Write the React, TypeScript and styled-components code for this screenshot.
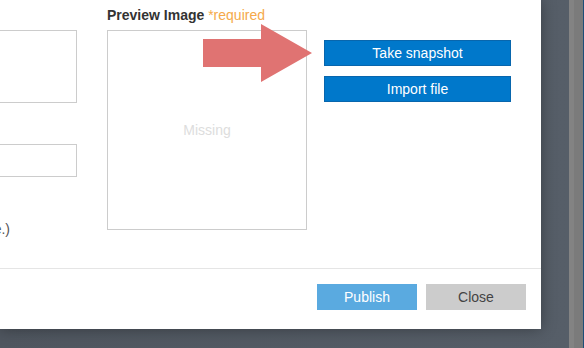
import styled, { createGlobalStyle } from 'styled-components';

const GlobalStyle = createGlobalStyle`
  html, body {
    margin: 0;
    padding: 0;
    overflow: hidden;
  }
  body {
    font-family: "Liberation Sans", Arial, sans-serif;
    background: #535a63;
  }
`;

export default function App() {
  return (
    <>
      <GlobalStyle />
      <Page>
        <Backdrop>
          <Dialog>
            <Body>
              <FieldColumn>
                <TextArea />
                <TextInput />
                <HelpText>(Optional, shown on the page.)</HelpText>
              </FieldColumn>
              <PreviewColumn>
                <Label>
                  Preview Image <Required>*required</Required>
                </Label>
                <PreviewBox>Missing</PreviewBox>
              </PreviewColumn>
              <ActionColumn>
                <ActionButton>Take snapshot</ActionButton>
                <ActionButton>Import file</ActionButton>
              </ActionColumn>
              <Arrow width="110" height="60" viewBox="0 0 110 60">
                <polygon
                  points="0,15 58,15 58,0 109,29 58,58 58,43 0,43"
                  fill="#e07372"
                />
              </Arrow>
            </Body>
            <Footer>
              <FooterButton $variant="primary">Publish</FooterButton>
              <FooterButton $variant="neutral">Close</FooterButton>
            </Footer>
          </Dialog>
        </Backdrop>
        <ScrollStrip />
        <EdgeLine />
      </Page>
    </>
  );
}

const Page = styled.div`
  display: flex;
  width: 584px;
  height: 348px;
  overflow: hidden;
`;

const Backdrop = styled.div`
  width: 569px;
  height: 348px;
  flex-shrink: 0;
  background: linear-gradient(90deg, #4f565f 0%, #565e68 100%);
`;

const Dialog = styled.div`
  width: 541px;
  height: 329px;
  background: #fff;
  box-shadow: 0 0 14px rgba(0, 0, 0, 0.35);
  display: flex;
  flex-direction: column;
`;

const Body = styled.div`
  position: relative;
  display: flex;
  align-items: flex-start;
  gap: 30px;
  height: 269px;
  box-sizing: border-box;
  padding: 7px 30px 0 0;
  border-bottom: 1px solid #e5e5e5;
`;

const FieldColumn = styled.div`
  display: flex;
  flex-direction: column;
  width: 277px;
  margin-left: -200px;
  flex-shrink: 0;
`;

const Label = styled.div`
  font-size: 14px;
  line-height: 16px;
  font-weight: bold;
  color: #333;
  margin-bottom: 7px;
  white-space: nowrap;
`;

const Required = styled.span`
  font-weight: normal;
  color: #f5a94a;
`;

const TextArea = styled.div`
  margin-top: 23px;
  height: 73px;
  box-sizing: border-box;
  border: 1px solid #ccc;
`;

const TextInput = styled.div`
  margin-top: 41px;
  height: 33px;
  box-sizing: border-box;
  border: 1px solid #ccc;
`;

const HelpText = styled.div`
  margin-top: 44px;
  padding-right: 67px;
  text-align: right;
  font-size: 14px;
  line-height: 16px;
  color: #555;
  white-space: nowrap;
`;

const PreviewColumn = styled.div`
  display: flex;
  flex-direction: column;
  width: 200px;
  flex-shrink: 0;
`;

const PreviewBox = styled.div`
  width: 200px;
  height: 200px;
  box-sizing: border-box;
  border: 1px solid #ccc;
  display: flex;
  align-items: center;
  justify-content: center;
  font-size: 14px;
  color: #ddd;
`;

const ActionColumn = styled.div`
  display: flex;
  flex-direction: column;
  gap: 10px;
  width: 187px;
  margin-left: -13px;
  padding-top: 33px;
  flex-shrink: 0;
`;

const ActionButton = styled.button`
  height: 26px;
  box-sizing: border-box;
  border: 1px solid #0866ad;
  background: #0078cb;
  color: #fff;
  font-family: inherit;
  font-size: 14px;
  padding: 0;
`;

const Arrow = styled.svg`
  position: absolute;
  left: 203px;
  top: 24px;
`;

const Footer = styled.div`
  display: flex;
  justify-content: flex-end;
  gap: 9px;
  padding: 15px 15px 18px;
`;

const FooterButton = styled.button<{ $variant: 'primary' | 'neutral' }>`
  width: 100px;
  height: 26px;
  border: none;
  padding: 0;
  font-family: inherit;
  font-size: 14px;
  background: ${(p) => (p.$variant === 'primary' ? '#5aaae0' : '#cccccc')};
  color: ${(p) => (p.$variant === 'primary' ? '#fff' : '#444')};
`;

const ScrollStrip = styled.div`
  width: 14px;
  height: 348px;
  flex-shrink: 0;
  box-sizing: border-box;
  background: #7b7b7b;
  border-left: 5px solid #838383;
`;

const EdgeLine = styled.div`
  width: 1px;
  height: 348px;
  flex-shrink: 0;
  background: #1d4e78;
`;
